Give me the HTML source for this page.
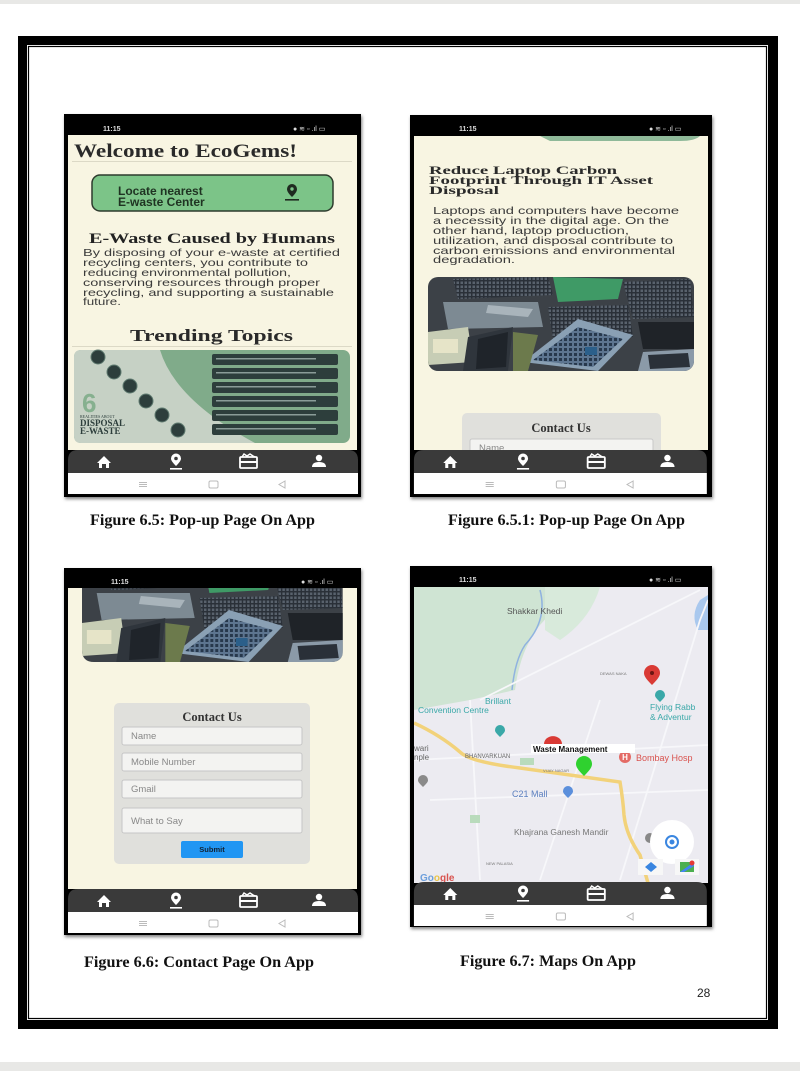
<!DOCTYPE html>
<html><head><meta charset="utf-8"><style>html,body{margin:0;padding:0;background:#fff}svg{display:block}</style></head>
<body>
<svg width="800" height="1071" viewBox="0 0 800 1071" xmlns="http://www.w3.org/2000/svg" font-family="Liberation Sans, sans-serif">
<defs>
  <pattern id="keys" width="4" height="4" patternUnits="userSpaceOnUse"><rect width="4" height="4" fill="#2a3038"/><rect x="0.5" y="0.5" width="2.5" height="2.5" fill="#59626d"/></pattern>
  <pattern id="keys2" width="5" height="5" patternUnits="userSpaceOnUse"><rect width="5" height="5" fill="#5d7590"/><rect x="1" y="1" width="3" height="3" fill="#27384c"/></pattern>
  <g id="photo">
    <rect x="0" y="0" width="266" height="94" fill="#3c4147"/>
    <polygon points="25,2 120,0 125,18 30,22" fill="url(#keys)"/>
    <polygon points="125,0 195,2 190,22 130,25" fill="#3f9a66"/>
    <polygon points="195,5 262,2 266,40 205,42" fill="url(#keys)"/>
    <polygon points="15,25 110,25 115,50 20,52" fill="#7d8a93"/>
    <polygon points="120,30 200,28 205,60 125,62" fill="url(#keys)"/>
    <polygon points="210,45 266,45 266,72 215,72" fill="#1f2328"/>
    <polygon points="95,85 150,42 205,58 170,94" fill="#8aa0b4"/>
    <polygon points="105,83 150,50 195,62 165,90" fill="url(#keys2)"/>
    <polygon points="0,55 40,50 45,85 0,88" fill="#c7cdb5"/>
    <polygon points="40,60 85,50 80,94 35,94" fill="#2f353c"/>
    <polygon points="215,75 266,72 266,94 210,94" fill="#8b9aa8"/>
    <polygon points="220,78 260,76 262,90 222,92" fill="#2a3038"/>
    <polygon points="85,55 110,58 100,94 85,94" fill="#6c7a4c"/>
    <rect x="157" y="70" width="12" height="8" fill="#2b5f8a"/>
    <polygon points="60,28 105,32 100,40 58,36" fill="#a9b4bb"/>
    <polygon points="50,62 80,55 78,90 48,92" fill="#1f242a"/>
    <rect x="5" y="62" width="25" height="14" fill="#e6e4c8"/>
  </g>
  <g id="nav">
    <path d="M0,23 L0,10 Q0,0 10,0 L280,0 Q290,0 290,10 L290,23 Z" fill="#3a3a3a"/>
    <rect x="0" y="23" width="290" height="21" fill="#fff"/>
    <path d="M29,13 L36,6 L43,13 L41,13 L41,18 L38,18 L38,14 L34,14 L34,18 L31,18 L31,13 Z" fill="#fff"/>
    <path d="M108,16 C104,12 103,10 103,8.5 A5,5 0 0 1 113,8.5 C113,10 112,12 108,16 Z" fill="#fff"/>
    <circle cx="108" cy="8.5" r="1.8" fill="#3a3a3a"/>
    <rect x="102" y="18" width="12" height="1.6" fill="#fff"/>
    <rect x="172" y="7" width="17" height="11" rx="1" fill="none" stroke="#fff" stroke-width="1.8"/>
    <path d="M174,7 L176,4 L179,6 L182,4 L185,6 L187,7" fill="none" stroke="#fff" stroke-width="1.5"/>
    <rect x="172" y="11" width="17" height="2" fill="#fff"/>
    <circle cx="251" cy="8" r="3.2" fill="#fff"/>
    <path d="M244,17 Q244,12 251,12 Q258,12 258,17 Z" fill="#fff"/>
    <rect x="71" y="32" width="8" height="1" fill="#bbb"/><rect x="71" y="34" width="8" height="1" fill="#bbb"/><rect x="71" y="36" width="8" height="1" fill="#bbb"/>
    <rect x="141" y="31" width="9" height="7" rx="1.5" fill="none" stroke="#bbb" stroke-width="1"/>
    <path d="M217,31 L211,34.5 L217,38 Z" fill="none" stroke="#bbb" stroke-width="1"/>
  </g>
  <g id="status">
    <text x="0" y="0" font-size="7" font-weight="bold" fill="#ddd">11:15</text>
    <text x="190" y="0" font-size="7" fill="#ddd">● ≋ ▫ .ıl ▭</text>
  </g>
  <clipPath id="c1"><rect x="428" y="277" width="266" height="94" rx="10"/></clipPath>
  <clipPath id="c2"><path d="M82,588 L343,588 L343,650 Q343,662 331,662 L94,662 Q82,662 82,650 Z"/></clipPath>
  <clipPath id="cmap"><rect x="414" y="587" width="294" height="296"/></clipPath>
  <filter id="sh"><feDropShadow dx="1" dy="2" stdDeviation="1.5" flood-opacity="0.5"/></filter>
</defs>

<rect x="0" y="0" width="800" height="4" fill="#e8e8e6"/>
<rect x="0" y="1062" width="800" height="9" fill="#e8e8e6"/>

<rect x="18" y="36" width="760" height="993" fill="#000"/>
<rect x="27" y="45" width="741" height="975" fill="#fff"/>
<rect x="28.5" y="46.5" width="738" height="972" fill="none" stroke="#000" stroke-width="1.2"/>

<!-- PHONE 1 -->
<rect x="64" y="114" width="297" height="383" fill="#000" filter="url(#sh)"/>
<rect x="68" y="135" width="289" height="315" fill="#f8f5e2"/>
<use href="#status" x="103" y="131"/>
<text x="74" y="157" font-family="Liberation Serif, serif" font-weight="bold" font-size="19" fill="#2a2a2a" textLength="223" lengthAdjust="spacingAndGlyphs">Welcome to EcoGems!</text>
<rect x="72" y="161" width="280" height="1" fill="#dcd9c6"/>
<rect x="92" y="175" width="241" height="36" rx="8" fill="#7cc488" stroke="#2d3b2d" stroke-width="1.5"/>
<text x="118" y="195" font-size="12" font-weight="bold" fill="#1f3322">Locate nearest</text>
<text x="118" y="206" font-size="12" font-weight="bold" fill="#1f3322">E-waste Center</text>
<path d="M292,197 C288,193 287,191 287,189 A5,5 0 0 1 297,189 C297,191 296,193 292,197 Z" fill="#1f2a20"/>
<circle cx="292" cy="189" r="1.7" fill="#7cc488"/>
<rect x="285" y="199" width="14" height="1.6" fill="#1f2a20"/>
<text x="89" y="243" font-family="Liberation Serif, serif" font-weight="bold" font-size="15" fill="#222" textLength="246" lengthAdjust="spacingAndGlyphs">E-Waste Caused by Humans</text>
<g font-size="10.2" fill="#3a3a3a">
<text x="83" y="256" textLength="257" lengthAdjust="spacingAndGlyphs">By disposing of your e-waste at certified</text>
<text x="83" y="266" textLength="225" lengthAdjust="spacingAndGlyphs">recycling centers, you contribute to</text>
<text x="83" y="276" textLength="208" lengthAdjust="spacingAndGlyphs">reducing environmental pollution,</text>
<text x="83" y="286" textLength="237" lengthAdjust="spacingAndGlyphs">conserving resources through proper</text>
<text x="83" y="296" textLength="251" lengthAdjust="spacingAndGlyphs">recycling, and supporting a sustainable</text>
<text x="83" y="305" textLength="38" lengthAdjust="spacingAndGlyphs">future.</text>
</g>
<text x="130" y="341" font-family="Liberation Serif, serif" font-weight="bold" font-size="17" fill="#2a2a2a" textLength="163" lengthAdjust="spacingAndGlyphs">Trending Topics</text>
<rect x="72" y="346" width="280" height="1" fill="#dcd9c6"/>
<rect x="74" y="350" width="276" height="93" rx="7" fill="#80ab8a"/>
<path d="M81,350 L160,350 Q175,400 255,443 L81,443 Q74,443 74,436 L74,357 Q74,350 81,350 Z" fill="#c6d1c5"/>
<g fill="#2d3e3c" stroke="#5f7a70" stroke-width="1">
<circle cx="98" cy="357" r="7"/><circle cx="114" cy="372" r="7"/><circle cx="130" cy="386" r="7"/><circle cx="146" cy="401" r="7"/><circle cx="162" cy="415" r="7"/><circle cx="178" cy="430" r="7"/>
</g>
<g fill="#2d3e3c">
<rect x="212" y="354" width="126" height="11" rx="2"/><rect x="212" y="368" width="126" height="11" rx="2"/><rect x="212" y="382" width="126" height="11" rx="2"/><rect x="212" y="396" width="126" height="11" rx="2"/><rect x="212" y="410" width="126" height="11" rx="2"/><rect x="212" y="424" width="126" height="11" rx="2"/>
</g>
<g fill="#8a9c98"><rect x="216" y="358" width="100" height="1.5"/><rect x="216" y="372" width="100" height="1.5"/><rect x="216" y="386" width="100" height="1.5"/><rect x="216" y="400" width="100" height="1.5"/><rect x="216" y="414" width="100" height="1.5"/><rect x="216" y="428" width="100" height="1.5"/></g>
<text x="82" y="412" font-family="Liberation Sans, sans-serif" font-weight="bold" font-size="26" fill="#86b08f">6</text>
<text x="80" y="418" font-family="Liberation Serif, serif" font-size="4" fill="#2d3e3c">REALITIES ABOUT</text>
<text x="80" y="426" font-family="Liberation Serif, serif" font-weight="bold" font-size="9" fill="#2d3e3c">DISPOSAL</text>
<text x="80" y="434" font-family="Liberation Serif, serif" font-weight="bold" font-size="9" fill="#2d3e3c">E-WASTE</text>
<use href="#nav" x="68" y="450"/>

<!-- PHONE 2 -->
<rect x="410" y="115" width="302" height="382" fill="#000" filter="url(#sh)"/>
<rect x="414" y="136" width="294" height="314" fill="#f8f5e2"/>
<path d="M540,136 L700,136 Q695,141 680,141 L550,141 Z" fill="#8fb999"/>
<use href="#status" x="459" y="131"/>
<g font-family="Liberation Serif, serif" font-weight="bold" font-size="12" fill="#2a2a2a">
<text x="429" y="174" textLength="188" lengthAdjust="spacingAndGlyphs">Reduce Laptop Carbon</text>
<text x="429" y="184" textLength="224" lengthAdjust="spacingAndGlyphs">Footprint Through IT Asset</text>
<text x="429" y="194" textLength="70" lengthAdjust="spacingAndGlyphs">Disposal</text>
</g>
<g font-size="10.5" fill="#3a3a3a">
<text x="433" y="214" textLength="246" lengthAdjust="spacingAndGlyphs">Laptops and computers have become</text>
<text x="433" y="224" textLength="236" lengthAdjust="spacingAndGlyphs">a necessity in the digital age. On the</text>
<text x="433" y="234" textLength="196" lengthAdjust="spacingAndGlyphs">other hand, laptop production,</text>
<text x="433" y="244" textLength="240" lengthAdjust="spacingAndGlyphs">utilization, and disposal contribute to</text>
<text x="433" y="254" textLength="242" lengthAdjust="spacingAndGlyphs">carbon emissions and environmental</text>
<text x="433" y="263" textLength="82" lengthAdjust="spacingAndGlyphs">degradation.</text>
</g>
<g clip-path="url(#c1)"><use href="#photo" x="428" y="277"/></g>
<rect x="462" y="413" width="199" height="45" rx="5" fill="#e0e0dc"/>
<text x="561" y="432" text-anchor="middle" font-family="Liberation Serif, serif" font-weight="bold" font-size="12.5" fill="#333">Contact Us</text>
<rect x="470" y="439" width="183" height="14" rx="2" fill="#f3f3f1" stroke="#c8c8c8"/>
<text x="479" y="451" font-size="9.5" fill="#888">Name</text>
<use href="#nav" x="414" y="450" transform="translate(-4.2,0) scale(1.01,1)"/>

<!-- PHONE 3 -->
<rect x="64" y="568" width="297" height="367" fill="#000" filter="url(#sh)"/>
<rect x="68" y="588" width="289" height="301" fill="#f8f5e2"/>
<use href="#status" x="111" y="584"/>
<g clip-path="url(#c2)"><use href="#photo" transform="translate(82,568) scale(0.98,1)"/></g>
<rect x="114" y="703" width="196" height="161" rx="5" fill="#e0e0dc"/>
<text x="212" y="721" text-anchor="middle" font-family="Liberation Serif, serif" font-weight="bold" font-size="12.5" fill="#333">Contact Us</text>
<g fill="#f3f3f1" stroke="#c6c6c6">
<rect x="122" y="727" width="180" height="18" rx="2"/>
<rect x="122" y="753" width="180" height="18" rx="2"/>
<rect x="122" y="780" width="180" height="18" rx="2"/>
<rect x="122" y="808" width="180" height="25" rx="2"/>
</g>
<g font-size="9.5" fill="#888">
<text x="131" y="739">Name</text>
<text x="131" y="765">Mobile Number</text>
<text x="131" y="792">Gmail</text>
<text x="131" y="824">What to Say</text>
</g>
<rect x="181" y="841" width="62" height="17" rx="2" fill="#2196f3"/>
<text x="212" y="852" text-anchor="middle" font-size="7.5" font-weight="bold" fill="#123">Submit</text>
<use href="#nav" x="68" y="889"/>

<!-- PHONE 4 MAP -->
<rect x="410" y="566" width="302" height="361" fill="#000" filter="url(#sh)"/>
<use href="#status" x="459" y="582"/>
<g clip-path="url(#cmap)">
<rect x="414" y="587" width="294" height="296" fill="#ecebf1"/>
<path d="M414,587 L560,587 Q555,610 540,625 Q520,650 515,690 L470,700 L414,710 Z" fill="#cfe4d3"/>
<path d="M545,587 L600,587 Q590,620 560,640 L545,630 Z" fill="#d8eadb"/>
<path d="M700,600 Q690,615 698,630 L708,630 L708,595 Z" fill="#a9c8ee"/>
<path d="M540,590 Q548,620 525,645 Q515,660 512,690" fill="none" stroke="#8fb2e0" stroke-width="1.5"/>
<g stroke="#f7f7fa" stroke-width="1.8" fill="none">
<path d="M620,880 L700,620 L708,600"/><path d="M480,700 L600,640 L700,590"/><path d="M414,760 L708,745"/><path d="M540,880 L600,700"/><path d="M430,800 L708,790"/><path d="M470,700 L480,880"/>
</g>
<path d="M414,723 Q440,735 460,752 Q470,762 520,768 L620,782 Q623,800 624,815 Q626,835 640,855 L648,883" fill="none" stroke="#f2d27a" stroke-width="3.5"/>
<rect x="520" y="758" width="14" height="7" fill="#b9dbbc"/>
<rect x="470" y="815" width="10" height="8" fill="#b9dbbc"/>
<text x="507" y="614" font-size="8.5" fill="#555">Shakkar Khedi</text>
<text x="485" y="704" font-size="8.5" fill="#3aa8a8">Brillant</text>
<text x="418" y="713" font-size="8.5" fill="#3aa8a8">Convention Centre</text>
<text x="650" y="710" font-size="8.5" fill="#3aa8a8">Flying Rabb</text>
<text x="650" y="720" font-size="8.5" fill="#3aa8a8">&amp; Adventur</text>
<text x="600" y="675" font-size="4" fill="#777">DEWAS NAKA</text>
<text x="414" y="751" font-size="8" fill="#666">wari</text>
<text x="414" y="760" font-size="8" fill="#666">nple</text>
<text x="465" y="758" font-size="6" fill="#666">BHANVARKUAN</text>
<text x="543" y="772" font-size="4" fill="#777">VIJAY NAGAR</text>
<text x="636" y="761" font-size="9" fill="#d9534f">Bombay Hosp</text>
<circle cx="625" cy="757" r="6" fill="#e46b66"/><text x="625" y="760" text-anchor="middle" font-size="8" font-weight="bold" fill="#fff">H</text>
<text x="512" y="797" font-size="9" fill="#5b7fbf">C21 Mall</text>
<text x="514" y="835" font-size="8.5" fill="#777">Khajrana Ganesh Mandir</text>
<text x="486" y="865" font-size="4" fill="#777">NEW PALASIA</text>
<path d="M652,685 C646,679 644,676 644,673 A8,8 0 0 1 660,673 C660,676 658,679 652,685 Z" fill="#d93a35"/>
<circle cx="652" cy="673" r="2" fill="#6b1512"/>
<path d="M660,702 C656,698 655,697 655,695 A5,5 0 0 1 665,695 C665,697 664,698 660,702 Z" fill="#3aa8a8"/>
<path d="M500,737 C496,733 495,732 495,730 A5,5 0 0 1 505,730 C505,732 504,733 500,737 Z" fill="#3aa8a8"/>
<path d="M544,744 A8,7 0 0 1 562,744 Z" fill="#d93a35"/>
<path d="M584,776 C578,770 576,767 576,764 A8,8 0 0 1 592,764 C592,767 590,770 584,776 Z" fill="#2fd12f"/>
<path d="M568,798 C564,794 563,793 563,791 A5,5 0 0 1 573,791 C573,793 572,794 568,798 Z" fill="#5b8fdc"/>
<path d="M423,787 C419,783 418,782 418,780 A5,5 0 0 1 428,780 C428,782 427,783 423,787 Z" fill="#8a8a8a"/>
<rect x="531" y="744" width="104" height="9" fill="#fff"/>
<text x="533" y="752" font-size="8" font-weight="bold" fill="#111">Waste Management</text>
<circle cx="650" cy="838" r="5" fill="#888"/>
<circle cx="672" cy="842" r="22" fill="#fff"/>
<circle cx="672" cy="842" r="6" fill="none" stroke="#3a86e0" stroke-width="2"/>
<circle cx="672" cy="842" r="2.5" fill="#3a86e0"/>
<rect x="638" y="859" width="25" height="16" fill="#f7f7f7"/>
<path d="M645,867 L651,862 L657,867 L651,872 Z" fill="#3a86e0"/>
<rect x="675" y="859" width="24" height="16" fill="#f7f7f7"/>
<rect x="680" y="862" width="14" height="10" fill="#4caf50"/><path d="M680,872 L694,862 L694,866 L684,872 Z" fill="#4285f4"/><circle cx="692" cy="863" r="2.5" fill="#e53935"/>
<text x="420" y="881" font-size="10" font-weight="bold" fill="#6d9fdc">Go<tspan fill="#e8c44a">o</tspan><tspan fill="#d9534f">gle</tspan></text>
</g>
<use href="#nav" x="414" y="882" transform="translate(-4.2,0) scale(1.01,1)"/>

<g font-family="Liberation Serif, serif" font-weight="bold" font-size="15.5" fill="#111">
<text x="90" y="525" textLength="225" lengthAdjust="spacingAndGlyphs">Figure 6.5: Pop-up Page On App</text>
<text x="448" y="525" textLength="237" lengthAdjust="spacingAndGlyphs">Figure 6.5.1: Pop-up Page On App</text>
<text x="84" y="967" textLength="230" lengthAdjust="spacingAndGlyphs">Figure 6.6: Contact Page On App</text>
<text x="460" y="966" textLength="176" lengthAdjust="spacingAndGlyphs">Figure 6.7: Maps On App</text>
</g>
<text x="697" y="997" font-size="12" fill="#222">28</text>
</svg>
</body></html>
